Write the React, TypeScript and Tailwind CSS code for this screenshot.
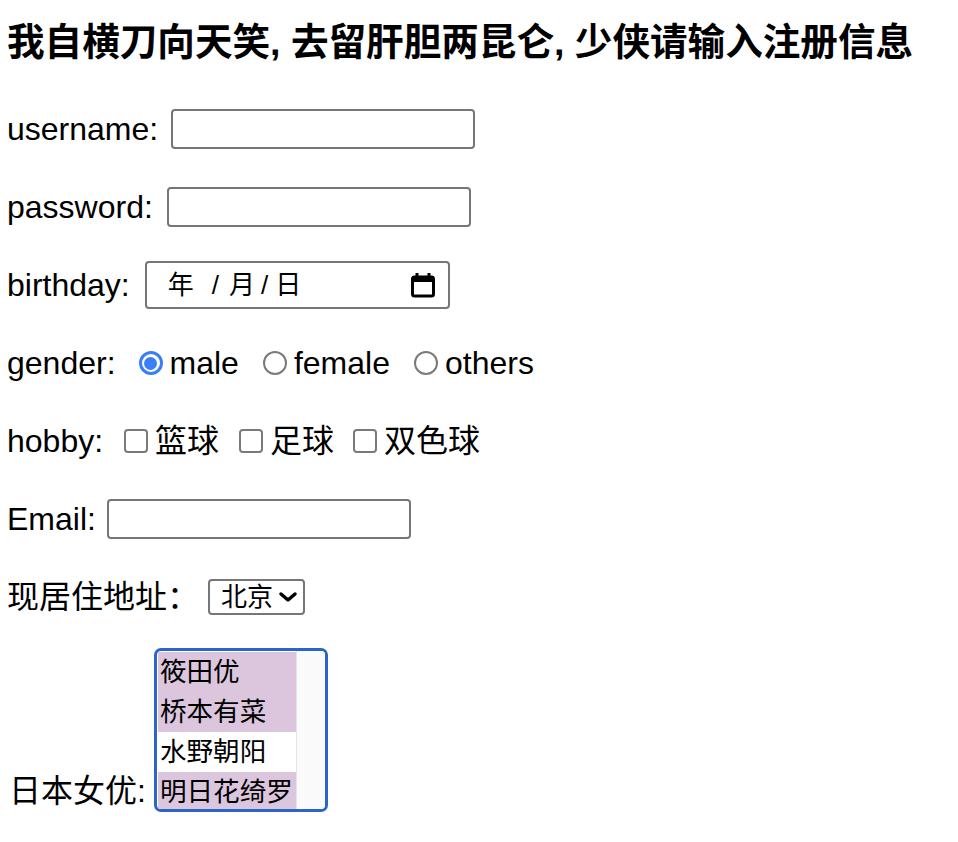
import React from "react";

const inputBox = "w-[304px] h-[40px] border-2 border-[#767676] rounded-[4px] bg-white";

function Radio({ checked }: { checked?: boolean }) {
  if (checked) {
    return (
      <span className="w-6 h-6 rounded-full border-[3px] border-[#3b7ff6] bg-white flex items-center justify-center shrink-0">
        <span className="block w-[13px] h-[13px] rounded-full bg-[#3b7ff6]" />
      </span>
    );
  }
  return <span className="block w-6 h-6 rounded-full border-2 border-[#7a7a7a] bg-white shrink-0" />;
}

function Checkbox() {
  return <span className="block w-6 h-6 rounded-[4px] border-2 border-[#7a7a7a] bg-white shrink-0" />;
}

function CalendarIcon() {
  return (
    <svg width="26" height="26" viewBox="0 0 26 26" fill="none">
      <rect x="2.5" y="5" width="21" height="19" rx="2" stroke="#000" strokeWidth="3" />
      <rect x="2" y="4" width="22" height="6" fill="#000" />
      <rect x="5.5" y="1" width="3" height="5" fill="#000" />
      <rect x="17.5" y="1" width="3" height="5" fill="#000" />
    </svg>
  );
}

function Chevron() {
  return (
    <svg width="20" height="12" viewBox="0 0 20 12" fill="none">
      <path d="M3 3 L10 9 L17 3" stroke="#000" strokeWidth="3.5" strokeLinecap="round" strokeLinejoin="round" />
    </svg>
  );
}

const actresses = [
  { name: "筱田优", selected: true },
  { name: "桥本有菜", selected: true },
  { name: "水野朝阳", selected: false },
  { name: "明日花绮罗", selected: true },
];

export default function App() {
  return (
    <div className="font-['Liberation_Sans','Noto_Sans_CJK_SC',sans-serif] text-black bg-white min-h-[842px] pl-[7px] text-[32px] leading-[37px]">
      {/* heading */}
      <div className="h-[90px] pb-[6px] flex items-center">
        <h3 className="text-[37.6px] font-bold leading-[44px]">我自横刀向天笑, 去留肝胆两昆仑, 少侠请输入注册信息</h3>
      </div>

      {/* username */}
      <div className="h-[78px] flex items-center">
        <span>username:</span>
        <div className={`ml-[13px] ${inputBox}`} />
      </div>

      {/* password */}
      <div className="h-[78px] flex items-center">
        <span>password:</span>
        <div className={`ml-[14px] ${inputBox}`} />
      </div>

      {/* birthday */}
      <div className="h-[78px] flex items-center">
        <span>birthday:</span>
        <div className="ml-[15px] w-[305px] h-[48px] border-2 border-[#767676] rounded-[4px] bg-white flex items-center justify-between pl-[21px] pr-[12px] text-[26px]">
          <div className="flex items-center">
            <span>年</span>
            <span className="ml-[18px]">/</span>
            <span className="ml-[10px]">月</span>
            <span className="ml-[6px]">/</span>
            <span className="ml-[7px]">日</span>
          </div>
          <CalendarIcon />
        </div>
      </div>

      {/* gender */}
      <div className="h-[78px] flex items-center">
        <span>gender:</span>
        <span className="ml-[23px] flex"><Radio checked /></span>
        <span className="ml-[7px]">male</span>
        <span className="ml-[24px] flex"><Radio /></span>
        <span className="ml-[7px]">female</span>
        <span className="ml-[24px] flex"><Radio /></span>
        <span className="ml-[7px]">others</span>
      </div>

      {/* hobby */}
      <div className="h-[78px] flex items-center">
        <span>hobby:</span>
        <span className="ml-[21px] flex"><Checkbox /></span>
        <span className="ml-[7px]">篮球</span>
        <span className="ml-[20px] flex"><Checkbox /></span>
        <span className="ml-[7px]">足球</span>
        <span className="ml-[19px] flex"><Checkbox /></span>
        <span className="ml-[7px]">双色球</span>
      </div>

      {/* email */}
      <div className="h-[78px] flex items-center">
        <span>Email:</span>
        <div className={`ml-[11px] ${inputBox}`} />
      </div>

      {/* address */}
      <div className="h-[78px] flex items-center">
        <span>现居住地址：</span>
        <div className="ml-[9px] w-[97px] h-[36px] border-2 border-[#767676] rounded-[4px] bg-white flex items-center pl-[11px] text-[26px] leading-[30px]">
          <span>北京</span>
          <span className="ml-[5px] flex"><Chevron /></span>
        </div>
      </div>

      {/* listbox */}
      <div className="pt-[12px] flex items-end">
        <span className="ml-[2px] mb-[2px]">日本女优:</span>
        <div className="ml-[8px] w-[174px] h-[164px] border-[3px] border-[#2d64c8] rounded-[7px] bg-white overflow-hidden flex">
          <div className="flex-1 pt-[1px] pl-[1px] text-[26.6px] leading-[40px]">
            {actresses.map(a => (
              <div key={a.name} className={`h-[40px] pl-[2px] ${a.selected ? "bg-[#dbc6dd]" : "bg-white"}`}>
                {a.name}
              </div>
            ))}
          </div>
          <div className="w-[29px] bg-[#fafafa] border-l border-[#e6e6e6]" />
        </div>
      </div>
    </div>
  );
}
